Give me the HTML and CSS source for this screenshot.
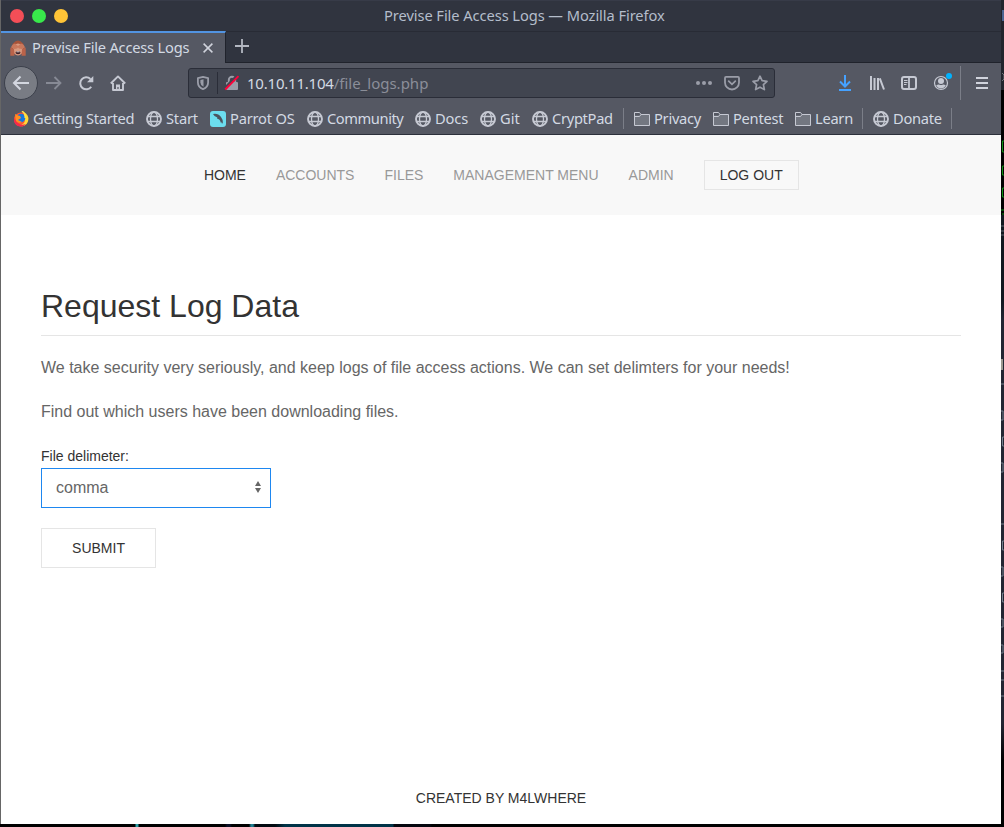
FILE: index.html
```html
<!DOCTYPE html>
<html lang="en">
<head>
<meta charset="utf-8">
<title>Previse File Access Logs</title>
<link rel="stylesheet" href="styles.css">
</head>
<body>
<svg class="defs" width="0" height="0">
  <symbol id="globe" viewBox="0 0 16 16"><g fill="none" stroke="#c6c9d3"><circle cx="8" cy="8" r="7" stroke-width="1.9"/><ellipse cx="8" cy="8" rx="3.5" ry="7" stroke-width="1.3"/><path d="M1.5 5.5h13M1.5 10.5h13" stroke-width="1.3"/></g></symbol>
  <symbol id="folder" viewBox="0 0 16 16"><path d="M.5 14.5v-13h5l1.5 2h8.5v11z" fill="#737781" stroke="#c6c9d3"/><path d="M1 2h4.3l1.2 2.5H1z" fill="#555863"/><path d="M.5 5.5h5l1.5-2" fill="none" stroke="#c6c9d3"/></symbol>
</svg>
<div class="desktop">
<div class="window">
  <header class="titlebar">
    <div class="lights"><i class="red"></i><i class="green"></i><i class="yellow"></i></div>
    <div class="window-title">Previse File Access Logs — Mozilla Firefox</div>
  </header>
  <div class="tabs">
    <div class="tab">
      <svg class="monkey" width="16" height="16" viewBox="0 0 16 16"><path d="M3 3.500Q8-2.500 13 3.500l1.500 4.500-2 6h-9L1.500 8z" fill="#a65339"/><ellipse cx="8" cy="9.500" rx="5" ry="6" fill="#d99a80"/><path d="M1 7.500q1-3.500 4-4l3 2.500 3-2.500q3 .5 4 4l-3.500 1.500L9 8.500 8 7.500l-1 1-2.500.5z" fill="#c9785c"/><path d="M.3 7.500L4 9l.5 6.700H.3zM15.700 7.500L12 9l-.5 6.700h4.200z" fill="#b9634a"/><ellipse cx="8" cy="12.600" rx="2.500" ry="1.700" fill="#3f2026"/><path d="M6.500 11.800h3" stroke="#fff" stroke-width=".8"/></svg>
      <span class="tab-name">Previse File Access Logs</span>
      <svg class="close" width="10" height="10" viewBox="0 0 10 10"><path d="M.6.6l8.800 8.800M9.400.6L.6 9.400" stroke="#d0d3dc" stroke-width="1.500"/></svg>
    </div>
    <div class="newtab"><svg width="14" height="14" viewBox="0 0 14 14"><path d="M7 0v14M0 7h14" stroke="#b3b7c1" stroke-width="1.800"/></svg></div>
  </div>
  <div class="toolbar">
    <div class="back"><svg width="18" height="16" viewBox="0 0 18 16"><path d="M17 8H2M8.500 1.500L2 8l6.500 6.500" fill="none" stroke="#d3d6df" stroke-width="2"/></svg></div>
    <svg class="forward" width="16" height="16" viewBox="0 0 16 16"><path d="M0 8h14.500M8.500 2l6 6-6 6" fill="none" stroke="#878a95" stroke-width="1.800"/></svg>
    <svg class="reload" width="16" height="16" viewBox="0 0 16 16"><path d="M13.200 11.700A6 6 0 1 1 12.400 4" fill="none" stroke="#c6c9d3" stroke-width="2"/><path d="M15.300 1v6.200H9z" fill="#c6c9d3"/></svg>
    <svg class="home" width="16" height="16" viewBox="0 0 16 16"><path d="M.8 8.500L8 1.400l7.200 7.100M3 8v7h10V8" fill="none" stroke="#c6c9d3" stroke-width="1.900" stroke-linejoin="round"/><path d="M6 15V9.500h4V15H8.600v-3H7.400v3z" fill="#c6c9d3"/></svg>
    <div class="urlbar">
      <svg class="shield" width="12" height="14" viewBox="0 0 12 14"><path d="M6 .9l5.100 1.200v4.400q0 4.600-5.100 6.600Q.9 11.100.9 6.500V2.100z" fill="none" stroke="#9a9da8" stroke-width="1.800" stroke-linejoin="round"/><path d="M6.500 3.200v7.500Q3.400 9.200 3.400 6.500V4z" fill="#9a9da8"/></svg>
      <i class="urlsep"></i>
      <svg class="lock" width="16" height="16" viewBox="0 0 16 16"><path d="M4.800 7V5a3.200 3.200 0 0 1 6.400 0v2" fill="none" stroke="#9a9da8" stroke-width="1.900"/><rect x="2" y="7" width="12" height="8" rx="1" fill="#9a9da8"/><path d="M1 13L14 0" stroke="#414550" stroke-width="3"/><path d="M1.200 14.500L14.500 1.200" stroke="#ff0039" stroke-width="1.900"/></svg>
      <span class="url"><b>10.10.11.104</b>/file_logs.php</span>
      <svg width="16" height="16" viewBox="0 0 16 16" fill="#9a9da8"><circle cx="2" cy="8" r="2"/><circle cx="8" cy="8" r="2"/><circle cx="14" cy="8" r="2"/></svg>
      <svg width="16" height="16" viewBox="0 0 16 16" fill="none" stroke="#9a9da8" stroke-width="1.800"><path d="M2 1.900h12q1 0 1 1V7.500a7 7 0 0 1-14 0V2.900q0-1 1-1z"/><path d="M4.700 6.200L8 9.300l3.300-3.100" stroke-linecap="round"/></svg>
      <svg width="16" height="16" viewBox="0 0 16 16"><path d="M8 1.200l2.100 4.500 4.900.6-3.600 3.400 1 4.900L8 12.200l-4.400 2.400 1-4.900L1 6.300l4.900-.6z" fill="none" stroke="#9a9da8" stroke-width="1.700" stroke-linejoin="round"/></svg>
    </div>
    <div class="tools">
      <svg width="16" height="16" viewBox="0 0 16 16" fill="none" stroke="#45a1ff" stroke-width="2"><path d="M8 0v11M3 6.500l5 5 5-5M2 15h12"/></svg>
      <svg width="16" height="16" viewBox="0 0 16 16" fill="none" stroke="#c6c9d3" stroke-width="2"><path d="M2 1v14M5.500 3v12M9 3v12M10.800 3.300L15 14.500"/></svg>
      <svg width="16" height="16" viewBox="0 0 16 16" fill="none" stroke="#c6c9d3"><rect x="1" y="2" width="14" height="12" rx="2" stroke-width="2"/><path d="M8 2v12" stroke-width="1.800"/><path d="M3 5.500h3.500M3 7.500h3.500M3 9.500h2.500"/></svg>
      <div class="account"><svg width="16" height="16" viewBox="0 0 16 16"><circle cx="8" cy="8" r="6.500" fill="none" stroke="#c6c9d3" stroke-width="1.200"/><circle cx="8" cy="6" r="3" fill="#c6c9d3"/><path d="M3.200 10.300q1.500-1 2.800-.9 2 1.300 4 0 1.300-.1 2.800.9-1.800 3.200-4.800 3.200t-4.800-3.200z" fill="#c6c9d3"/></svg><i></i></div>
    </div>
    <i class="toolsep"></i>
    <svg class="menu" width="12" height="12" viewBox="0 0 12 12"><path d="M0 1h12M0 6h12M0 11h12" stroke="#d0d3dc" stroke-width="2"/></svg>
  </div>
  <nav class="bookmarks">
    <a class="w-start"><svg viewBox="0 0 16 16"><circle cx="8" cy="8.500" r="7" fill="#ff582f"/><path d="M11 1q5 3 4.300 8-.8 5-5.500 6.200L6 14q6 0 6-6z" fill="#ffd936"/><path d="M1 7q-.5 8 6 8.500 4 .3 6-2.500-5 2-8-1z" fill="#f52a4d"/><circle cx="8" cy="7" r="4.300" fill="#1477df"/><path d="M2 3l3 1.500 2 .5 1 2-3 2 4 2q-4 2-6-1z" fill="#ff8f20"/><path d="M9 0q4 3 3 7" fill="none" stroke="#ffe14b" stroke-width="1.500"/></svg><span>Getting Started</span></a>
    <a class="w-home"><svg><use href="#globe"/></svg><span>Start</span></a>
    <a class="w-parrot"><svg viewBox="0 0 16 16"><rect width="16" height="16" rx="3" fill="#6cdeef"/><path d="M3 3q5-1 8 3 2.500 3 2 7l-1.300-2-.5 1.500L10 9.500l-.8-1L7 7.500l.3-1L4.500 5z" fill="#4b5660"/></svg><span>Parrot OS</span></a>
    <a class="w-community"><svg><use href="#globe"/></svg><span>Community</span></a>
    <a class="w-docs"><svg><use href="#globe"/></svg><span>Docs</span></a>
    <a class="w-git"><svg><use href="#globe"/></svg><span>Git</span></a>
    <a class="w-crypt"><svg><use href="#globe"/></svg><span>CryptPad</span></a>
    <i class="sep"></i>
    <a class="w-privacy"><svg><use href="#folder"/></svg><span>Privacy</span></a>
    <a class="w-pentest"><svg><use href="#folder"/></svg><span>Pentest</span></a>
    <a class="w-learn"><svg><use href="#folder"/></svg><span>Learn</span></a>
    <i class="sep"></i>
    <a class="w-donate"><svg><use href="#globe"/></svg><span>Donate</span></a>
    <i class="sep"></i>
  </nav>
  <div class="page">
    <nav class="sitenav">
      <a class="active">HOME</a><a>ACCOUNTS</a><a>FILES</a><a>MANAGEMENT MENU</a><a>ADMIN</a><button class="logout">LOG OUT</button>
    </nav>
    <main>
      <h1>Request Log Data</h1>
      <p>We take security very seriously, and keep logs of file access actions. We can set delimters for your needs!</p>
      <p>Find out which users have been downloading files.</p>
      <form>
        <label>File delimeter:</label>
        <div class="select"><span>comma</span><svg width="6" height="12" viewBox="0 0 6 12"><path d="M0 5l3-5 3 5zM0 7h6l-3 5z" fill="#666"/></svg></div>
        <button class="submit" type="button">SUBMIT</button>
      </form>
    </main>
    <footer>CREATED BY M4LWHERE</footer>
  </div>
</div>
<svg class="behind" width="3" height="824" viewBox="0 0 3 824">
  <path d="M2 10v11" stroke="#4a6491" stroke-width="2"/>
  <path d="M1 73l2 2v4l-2 2" stroke="#70747c" fill="none"/>
  <path d="M3 141H1.500v11H3M3 166H1.500v9H3M3 188H1.500v9H3M0 210h3M1 214h2" stroke="#0b8f12" fill="none"/>
  <path d="M0 226h3M0 231h3M0 235h3" stroke="#59616b"/>
  <path d="M1 359v11" stroke="#9c9890" stroke-width="2"/>
  <path d="M0 384h3M0 411h2v9H0M3 437H1.500v9H3M0 463h2v9H0M0 524h3M3 541H1.500v9H3M0 567h2v9H0M3 593H1.500v9H3M0 619h2v8H0M0 645h2v8H0M0 671h3M0 680h3M0 696h3" fill="none" stroke="#717d8b"/>
</svg>
</div>
</body>
</html>
```
FILE: styles.css
```css
* { box-sizing: border-box; }
body { margin: 0; background: #000; overflow: hidden; }
.defs { display: block; height: 0; }
svg { display: block; flex: none; }
.desktop {
  width: 1004px; height: 827px;
  display: grid; grid-template-columns: 1001px 3px;
  background: linear-gradient(90deg, #000 0 135px, #2b9fa5 136px 138px, #000 139px 225px, #0b1026 227px 230px, #000 232px 249px, #1f7e90 251px 253px, #020a10 255px 275px, #003347 285px 393px, #05070f 394px 430px, #000 432px);
}
.behind { height: 824px; background: linear-gradient(#22252d 0 90px, #000 90px 215px, #111820 215px 300px, #222633 320px 724px, #000 760px); }
.window {
  width: 1001px; height: 824px; border-left: 1px solid #666;
  display: flex; flex-direction: column;
  font-family: "Noto Sans", sans-serif; font-size: 14.67px; color: #d3dae3; white-space: nowrap;
}
.titlebar { height: 31px; background: #30343f; display: grid; grid-template-columns: 383px auto; align-items: center; border-top: 1px solid #373b48; }
.lights { display: flex; gap: 8px; padding-left: 9px; }
.lights i { width: 14px; height: 14px; border-radius: 50%; }
.red { background: #f44e57; }
.green { background: #38e84b; }
.yellow { background: #ffc437; }
.window-title { color: #b4bdcb; letter-spacing: -.07px; padding-bottom: 2px; }
.tabs { height: 32px; background: #30343f; display: flex; }
.tab { width: 225px; border-top: 2px solid #5294e2; border-right: 1px solid #20232c; background: #555863; display: flex; align-items: center; padding-left: 9px; }
.tab-name { width: 177px; padding: 0 0 3px 6px; letter-spacing: -.21px; }
.newtab { flex: 1; border-bottom: 1px solid #20232c; border-top: 1px solid #282b35; padding: 7px 0 0 9px; }
.toolbar { height: 40px; background: #555863; display: flex; align-items: center; padding-left: 3px; }
.back { width: 34px; height: 34px; border-radius: 50%; background: #797c84; border: 1px solid #3c404b; display: flex; align-items: center; justify-content: center; }
.forward { margin-left: 8px; }
.reload { margin-left: 16px; }
.home { margin-left: 16px; }
.urlbar { width: 587px; height: 30px; margin-left: 62px; background: #414550; border: 1px solid #2a2d38; border-radius: 3px; display: flex; align-items: center; gap: 12px; padding: 0 6px 0 8px; }
.urlsep { width: 1px; height: 22px; background: #2a2d38; margin-left: -4px; }
.lock { margin-left: -6px; }
.url { flex: 1; margin-left: -5px; color: #8b8e99; font-size: 15px; }
.url b { font-weight: 400; color: #d3dae3; letter-spacing: -.22px; }
.tools { display: flex; gap: 16px; margin-left: 62px; }
.account { position: relative; }
.account i { position: absolute; left: 13px; top: -2px; width: 6px; height: 6px; border-radius: 50%; background: #00b3ff; }
.toolsep { width: 1px; height: 34px; margin-left: 11px; background: #7b7e88; }
.menu { margin-left: 15px; }
.bookmarks { height: 32px; background: #555863; border-bottom: 1px solid #2c303b; display: flex; align-items: center; padding-left: 12px; letter-spacing: -.27px; }
.bookmarks a { display: flex; align-items: center; gap: 4px; }
.bookmarks span { padding-bottom: 2px; }
.bookmarks svg { width: 16px; height: 16px; }
.sep { width: 1px; height: 21px; background: #7b7e88; margin-right: 10px; }
.w-start { width: 133px; }
.w-home { width: 64px; letter-spacing: -.2px; }
.w-parrot { width: 97px; letter-spacing: -.2px; }
.w-community { width: 108px; letter-spacing: -.42px; }
.w-docs { width: 65px; letter-spacing: -.1px; }
.w-git { width: 52px; letter-spacing: 0; }
.w-crypt { width: 91px; letter-spacing: -.3px; }
.w-privacy { width: 79px; }
.w-pentest { width: 82px; }
.w-learn { width: 67px; }
.w-donate { width: 78px; }
.page { flex: 1; background: #fff; font-family: "Liberation Sans", Arial, sans-serif; color: #666; display: flex; flex-direction: column; font-size: 16px; }
.sitenav { height: 80px; background: #f8f8f8; display: flex; justify-content: center; align-items: center; gap: 30px; font-size: 14px; color: #999; padding-left: .6px; }
.sitenav .active { color: #333; }
button { font: 14px "Liberation Sans", Arial, sans-serif; color: #333; background: transparent; border: 1px solid #e5e5e5; padding: 0; }
.logout { width: 95px; height: 30px; }
main { padding: 70px 40px 0; flex: 1; }
h1 { margin: 0 0 20px; height: 51px; border-bottom: 1px solid #e5e5e5; font-size: 32px; line-height: 42px; font-weight: 400; color: #333; }
p { margin: 0 0 20px; line-height: 24px; }
form { display: flex; flex-direction: column; align-items: flex-start; }
label { font-size: 14px; line-height: 24px; color: #333; }
.select { width: 230px; height: 40px; border: 1px solid #1e87f0; display: flex; align-items: center; justify-content: space-between; padding: 0 9px 0 14px; margin-bottom: 20px; }
.select svg { margin-bottom: 2px; }
.submit { width: 115px; height: 40px; }
footer { height: 37px; text-align: center; font-size: 14px; line-height: 22px; color: #333; }
```
